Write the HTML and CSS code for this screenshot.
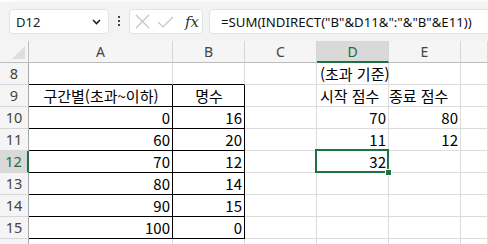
FILE: index.html
```html
<!DOCTYPE html>
<html lang="ko">
<head>
<meta charset="UTF-8">
<title>Excel - INDIRECT 합계</title>
<link rel="stylesheet" href="styles.css">
</head>
<body>
<div class="ribbon-edge"></div>
<div class="toolbar">
    <div class="namebox">
        <span>D12</span>
        <svg width="9" height="6" viewBox="0 0 9 6"><path d="M1 1 L4.5 4.5 L8 1" fill="none" stroke="#222" stroke-width="1.6"/></svg>
    </div>
    <div class="dots"><i></i><i></i><i></i></div>
    <div class="fxbox">
        <svg width="15" height="15" viewBox="0 0 15 15"><path d="M1 1 L14 14 M14 1 L1 14" stroke="#c4c4c4" stroke-width="1.2"/></svg>
        <svg width="17" height="12" viewBox="0 0 17 12"><path d="M1 6 L6 11 L16 1" fill="none" stroke="#c4c4c4" stroke-width="1.2"/></svg>
        <span class="fx">fx</span>
    </div>
    <div class="formula">=SUM(INDIRECT("B"&amp;D11&amp;":"&amp;"B"&amp;E11))</div>
</div>

<div class="sheet">
    <!-- column headers -->
    <div class="corner"></div>
    <div class="colhead">A</div>
    <div class="colhead">B</div>
    <div class="colhead">C</div>
    <div class="colhead sel">D</div>
    <div class="colhead">E</div>
    <div class="colhead"></div>

    <!-- row 8 -->
    <div class="rowhead">8</div>
    <div class="cell tb-top"></div>
    <div class="cell tb-top"></div>
    <div class="cell"></div>
    <div class="cell">(초과 기준)</div>
    <div class="cell"></div>
    <div class="cell"></div>

    <!-- row 9 -->
    <div class="rowhead">9</div>
    <div class="cell tb center">구간별(초과~이하)</div>
    <div class="cell tb center">명수</div>
    <div class="cell"></div>
    <div class="cell">시작 점수</div>
    <div class="cell spill">종료 점수</div>
    <div class="cell"></div>

    <!-- row 10 -->
    <div class="rowhead">10</div>
    <div class="cell tb num">0</div>
    <div class="cell tb num">16</div>
    <div class="cell"></div>
    <div class="cell num">70</div>
    <div class="cell num">80</div>
    <div class="cell"></div>

    <!-- row 11 -->
    <div class="rowhead">11</div>
    <div class="cell tb num">60</div>
    <div class="cell tb num">20</div>
    <div class="cell"></div>
    <div class="cell num">11</div>
    <div class="cell num">12</div>
    <div class="cell"></div>

    <!-- row 12 -->
    <div class="rowhead sel">12</div>
    <div class="cell tb num">70</div>
    <div class="cell tb num">12</div>
    <div class="cell"></div>
    <div class="cell num active">32</div>
    <div class="cell"></div>
    <div class="cell"></div>

    <!-- row 13 -->
    <div class="rowhead">13</div>
    <div class="cell tb num">80</div>
    <div class="cell tb num">14</div>
    <div class="cell"></div>
    <div class="cell"></div>
    <div class="cell"></div>
    <div class="cell"></div>

    <!-- row 14 -->
    <div class="rowhead">14</div>
    <div class="cell tb num">90</div>
    <div class="cell tb num">15</div>
    <div class="cell"></div>
    <div class="cell"></div>
    <div class="cell"></div>
    <div class="cell"></div>

    <!-- row 15 -->
    <div class="rowhead">15</div>
    <div class="cell tb num">100</div>
    <div class="cell tb num">0</div>
    <div class="cell"></div>
    <div class="cell"></div>
    <div class="cell"></div>
    <div class="cell"></div>

    <!-- row 16 (only its top edge is in view) -->
    <div class="rowhead"></div>
    <div class="cell"></div>
    <div class="cell"></div>
    <div class="cell"></div>
    <div class="cell"></div>
    <div class="cell"></div>
    <div class="cell"></div>
</div>
</body>
</html>
```

FILE: styles.css
```css
body {
    margin: 0;
    width: 488px;
    height: 244px;
    overflow: hidden;
    background-color: #ffffff;
    font-family: "Noto Sans", "Noto Sans CJK KR", sans-serif;
}
.ribbon-edge {
    height: 2px;
    margin-left: 10px;
    background-color: #fbfbfb;
    border-bottom-left-radius: 3px;
}
.toolbar {
    display: flex;
    align-items: flex-start;
    height: 32px;
    padding: 7px 0 0 9px;
    background-color: #f3f3f3;
}
.toolbar > div {
    flex-shrink: 0;
}
.namebox {
    box-sizing: border-box;
    width: 100px;
    height: 25px;
    display: flex;
    align-items: center;
    justify-content: space-between;
    padding: 0 7px 0 6px;
    background-color: #fff;
    border: 1px solid #e3e3e3;
    border-radius: 4px;
    font-size: 13px;
    color: #222;
}
.dots {
    display: flex;
    flex-direction: column;
    gap: 2px;
    margin: 7px 9px 0 9px;
}
.dots i {
    width: 2px;
    height: 2px;
    background-color: #444;
}
.fxbox {
    box-sizing: border-box;
    width: 74px;
    height: 25px;
    display: flex;
    align-items: center;
    padding-left: 5px;
    gap: 7px;
    background-color: #fff;
    border: 1px solid #e3e3e3;
    border-radius: 4px;
}
.fx {
    font-family: "DejaVu Serif", serif;
    font-style: italic;
    font-size: 15px;
    color: #333;
    margin-left: 4px;
}
.formula {
    box-sizing: border-box;
    width: 300px;
    height: 25px;
    margin-left: 6px;
    padding: 3px 0 0 11px;
    background-color: #fff;
    border: 1px solid #e3e3e3;
    border-radius: 4px;
    font-size: 13.2px;
    color: #111;
    white-space: nowrap;
}

.sheet {
    display: grid;
    grid-template-columns: 29px 144px 72px 72px 72px 72px 1fr;
    grid-auto-rows: 22px;
}
.sheet > div {
    box-sizing: border-box;
    border-right: 1px solid #dcdcdc;
    border-bottom: 1px solid #dcdcdc;
    white-space: nowrap;
}
.corner {
    position: relative;
    background-color: #f5f5f5;
    border-right-color: #bdbdbd !important;
    border-bottom-color: #bdbdbd !important;
}
.corner::after {
    content: "";
    position: absolute;
    right: 3px;
    bottom: 3px;
    border-left: 13px solid transparent;
    border-bottom: 13px solid #dedede;
}
.colhead {
    background-color: #f5f5f5;
    border-bottom-color: #bdbdbd !important;
    border-right-color: #d6d6d6 !important;
    text-align: center;
    font-size: 14px;
    line-height: 21px;
    color: #444;
}
.colhead.sel {
    background-color: #d9d9d9;
    color: #1d6b3f;
    border-bottom: 2px solid #1e7145 !important;
}
.rowhead {
    background-color: #f5f5f5;
    border-right-color: #a9a9a9 !important;
    border-bottom-color: #d6d6d6 !important;
    text-align: center;
    font-size: 14.5px;
    line-height: 21px;
    color: #444;
}
.rowhead.sel {
    background-color: #d9d9d9;
    color: #1d6b3f;
    border-right: 2px solid #1e7145 !important;
}
.cell {
    padding: 0 2px 0 3px;
    font-family: "Noto Sans CJK KR", sans-serif;
    font-size: 15px;
    line-height: 21px;
    color: #000;
}
.cell.num {
    text-align: right;
}
.cell.center {
    text-align: center;
}
.cell.spill {
    padding-left: 0;
}
.cell.tb-top {
    border-bottom-color: #000;
}
.cell.tb {
    border-right-color: #000;
    border-bottom-color: #000;
}
.cell.active {
    position: relative;
}
.cell.active::before {
    content: "";
    position: absolute;
    top: -2px;
    left: -2px;
    right: -1px;
    bottom: -1px;
    border: 2px solid #1e7145;
}
.cell.active::after {
    content: "";
    position: absolute;
    right: -4px;
    bottom: -4px;
    width: 5px;
    height: 5px;
    background-color: #1e7145;
    border: 1px solid #fff;
}
```
